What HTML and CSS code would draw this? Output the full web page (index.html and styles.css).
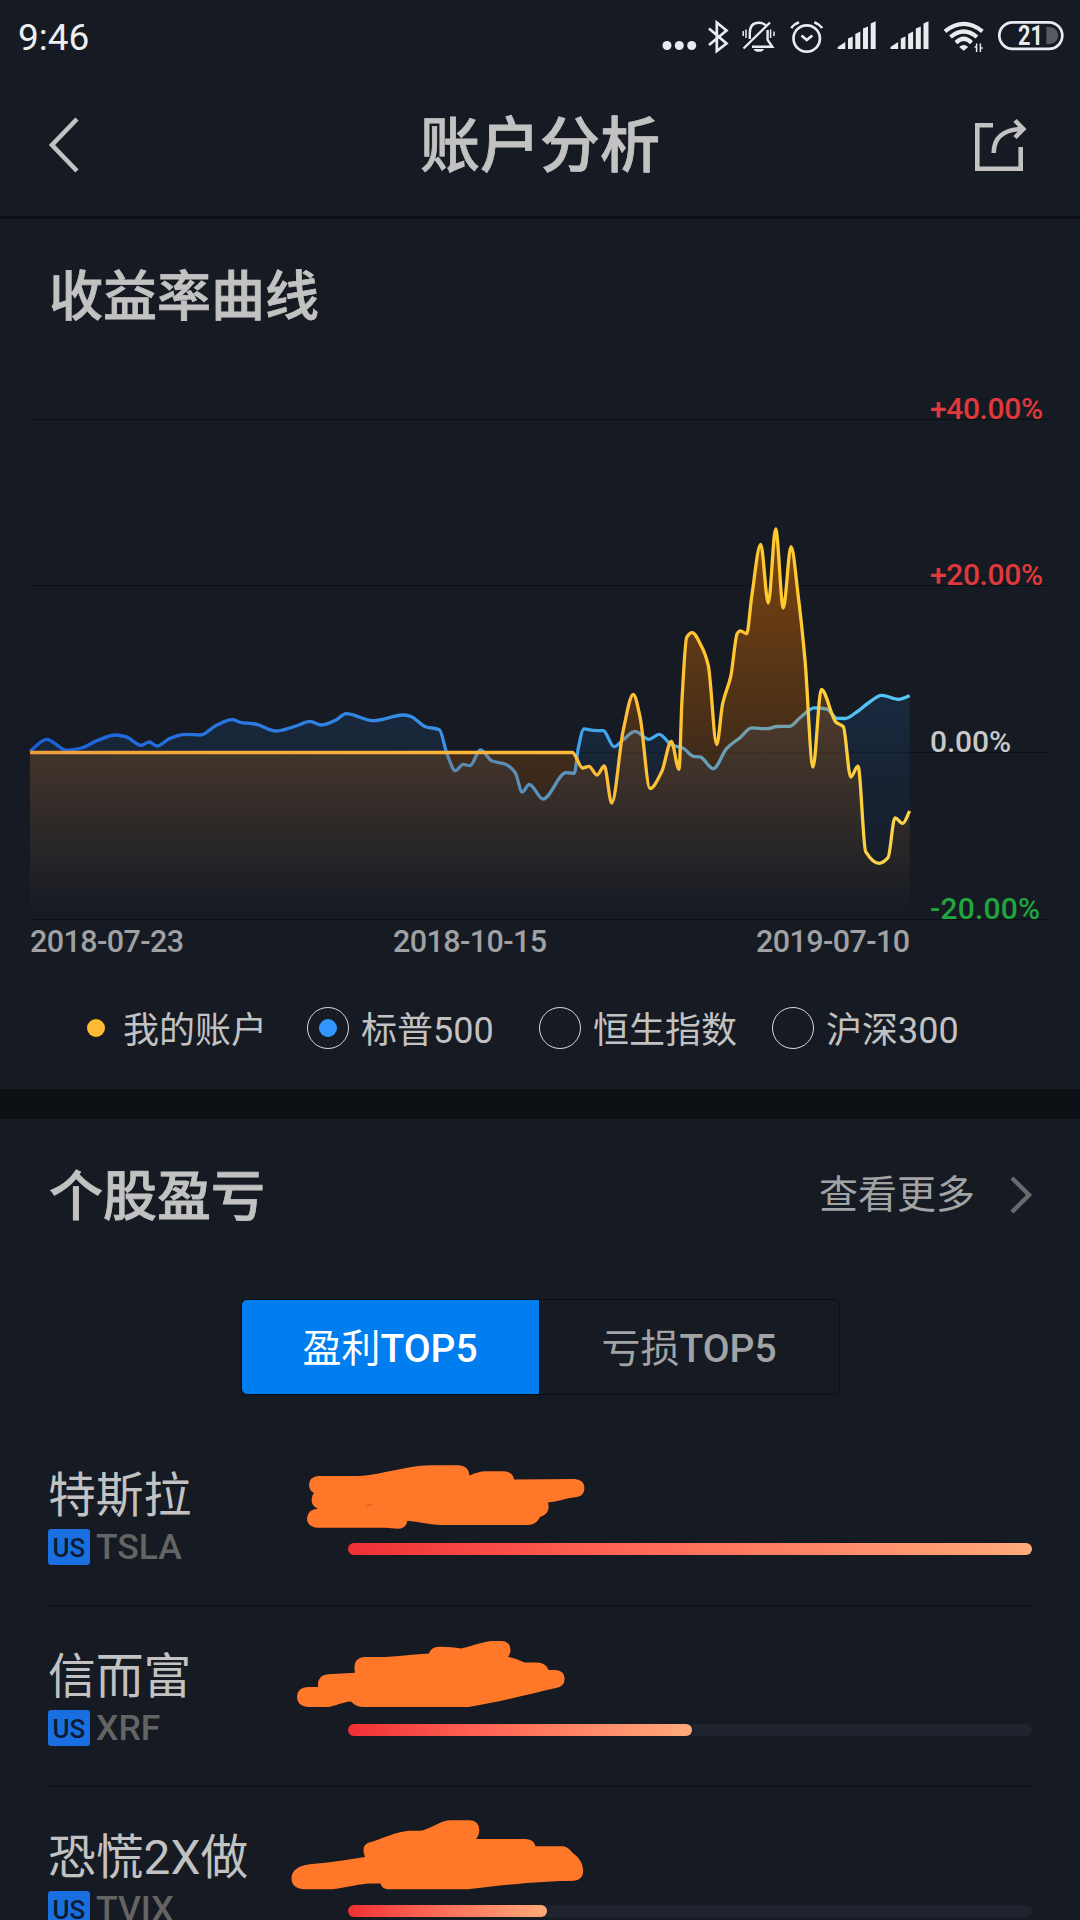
FILE: index.html
```html
<!DOCTYPE html>
<html lang="zh-CN">
<head>
    <meta charset="UTF-8">
    <meta name="viewport" content="width=device-width, initial-scale=1.0">
    <title>账户分析</title>
    <link rel="stylesheet" href="styles.css">
</head>
<body>
    <div class="status-bar">
        <span class="clock">9:46</span>
        <svg class="status-icons" viewBox="660 15 406 42" width="406" height="42">
            <!-- more -->
            <g fill="#e9ebee">
                <circle cx="667" cy="45.5" r="4.5"/>
                <circle cx="679.3" cy="45.5" r="4.5"/>
                <circle cx="691.7" cy="45.5" r="4.5"/>
            </g>
            <!-- bluetooth -->
            <path class="line" d="M709 28.5 L726.5 43.5 L716.8 51 V22.5 L726.5 30.5 L709 45"/>
            <!-- muted bell -->
            <g class="line thin">
                <path d="M770 22.5 L743.5 48.5"/>
                <path d="M749.8 39 V33 C749.8 26 753 22.8 759 22.8 C762 22.8 764.5 24 766 25.5"/>
                <path d="M767.6 30 V40 L772.3 46.8 H752"/>
                <path class="hair" d="M743.2 31 V36 M746 29.5 V38 M770.6 29.5 V38 M774 31.5 V36"/>
            </g>
            <path d="M753.5 49 H764 C762.5 52.8 755 52.8 753.5 49 Z" fill="#e9ebee"/>
            <!-- alarm -->
            <g class="line">
                <circle cx="806.7" cy="38.5" r="13.2"/>
                <path d="M801.5 35.5 L806.7 40 L812.3 35.5"/>
                <path d="M791.2 28 Q794 24 799 22.3 M814.3 22.3 Q819 24 822.2 28"/>
            </g>
            <!-- signal x2 -->
            <g id="signal" fill="#e9ebee">
                <path d="M837.7 49 V47 L845.3 42 V49 Z"/>
                <path d="M848 49 V38.5 L852.7 36.5 V49 Z"/>
                <path d="M855.3 49 V34 L860.3 31.5 V49 Z"/>
                <path d="M863 49 V28.5 L868 26.5 V49 Z"/>
                <path d="M870.7 49 V23.5 L875.7 21.3 V49 Z"/>
            </g>
            <use href="#signal" x="52.8"/>
            <!-- wifi -->
            <g class="line wifi">
                <path d="M945 31.3 Q963.7 16.5 982.4 31.3"/>
                <path d="M950.5 37 Q963.7 26 977 37"/>
                <path d="M956 42.7 Q963.7 35 971.5 42.7"/>
            </g>
            <path d="M959.2 47 Q963.7 43 968.2 47 L963.7 50.7 Z" fill="#e9ebee"/>
            <path class="line hair" d="M974.5 47 H976.6 M976.6 43.5 V52 M980.4 43.5 V52 M980.4 48 H982.7"/>
            <!-- battery -->
            <rect class="line" x="999.3" y="22.3" width="63" height="26.6" rx="13.3"/>
            <path d="M1046.3 27 H1049 C1055 27 1058 31 1058 35.5 C1058 40 1055 44 1049 44 H1046.3 Z" fill="#555a62"/>
            <text class="battery" x="1018" y="45" textLength="25" lengthAdjust="spacingAndGlyphs">21</text>
        </svg>
    </div>

    <header class="nav">
        <svg class="nav-back" viewBox="0 0 34 58" width="34" height="58">
            <path d="M29 3 L4 29 L29 55"/>
        </svg>
        <h1>账户分析</h1>
        <svg class="nav-share" viewBox="974 117 54 56" width="54" height="56">
            <path d="M993 125.3 H977.3 V168.7 H1020.7 V147"/>
            <path d="M993.7 153 C993.7 138 1003 129 1023 129"/>
            <path d="M1015 120.5 L1023.3 129 L1015 137.5"/>
        </svg>
    </header>

    <section class="curve">
        <h2>收益率曲线</h2>
        <svg class="chart" viewBox="0 380 1080 590" width="1080" height="590">
            <defs>
                <linearGradient id="mineLine" gradientUnits="userSpaceOnUse" x1="30" y1="0" x2="910" y2="0">
                    <stop offset="0" stop-color="#f0a13c"/>
                    <stop offset="0.6" stop-color="#ffb93a"/>
                    <stop offset="0.85" stop-color="#ffc92e"/>
                    <stop offset="1" stop-color="#fbd34c"/>
                </linearGradient>
                <linearGradient id="mineFill" gradientUnits="userSpaceOnUse" x1="0" y1="528" x2="0" y2="914">
                    <stop offset="0" stop-color="#c86400" stop-opacity="0.58"/>
                    <stop offset="1" stop-color="#c86400" stop-opacity="0"/>
                </linearGradient>
                <linearGradient id="indexLine" gradientUnits="userSpaceOnUse" x1="30" y1="0" x2="910" y2="0">
                    <stop offset="0" stop-color="#1a60dc"/>
                    <stop offset="0.5" stop-color="#3a94e8"/>
                    <stop offset="1" stop-color="#55c8f5"/>
                </linearGradient>
                <linearGradient id="indexFill" gradientUnits="userSpaceOnUse" x1="0" y1="695" x2="0" y2="919">
                    <stop offset="0" stop-color="#288cff" stop-opacity="0.13"/>
                    <stop offset="1" stop-color="#288cff" stop-opacity="0"/>
                </linearGradient>
            </defs>
            <path class="grid" d="M30 419.5 H1050 M30 585.5 H1050 M30 752.5 H1050 M30 919.5 H1050"/>
            <path id="indexArea" fill="url(#indexFill)"/>
            <path id="indexCurve" class="series" stroke="url(#indexLine)"/>
            <path id="mineArea" fill="url(#mineFill)"/>
            <path id="mineCurve" class="series" stroke="url(#mineLine)"/>
            <g class="axis">
                <text class="up" x="930" y="418.5" textLength="113">+40.00%</text>
                <text class="up" x="930" y="585" textLength="113">+20.00%</text>
                <text class="flat" x="930" y="751.5" textLength="81">0.00%</text>
                <text class="down" x="930" y="918.5" textLength="110">-20.00%</text>
            </g>
            <g class="dates">
                <text x="30" y="952" textLength="154">2018-07-23</text>
                <text x="393" y="952" textLength="154">2018-10-15</text>
                <text x="756" y="952" textLength="154">2019-07-10</text>
            </g>
        </svg>
        <div class="legend">
            <div class="legend-item mine"><i class="dot"></i><span>我的账户</span></div>
            <div class="legend-item"><i class="radio checked"></i><span>标普500</span></div>
            <div class="legend-item"><i class="radio"></i><span>恒生指数</span></div>
            <div class="legend-item"><i class="radio"></i><span>沪深300</span></div>
        </div>
    </section>

    <section class="stocks">
        <div class="stocks-head">
            <h2>个股盈亏</h2>
            <a class="more">查看更多
                <svg viewBox="0 0 24 40" width="24" height="40"><path d="M3 3 L20 20 L3 37"/></svg>
            </a>
        </div>

        <div class="tabs">
            <div class="tab active">盈利<b>TOP5</b></div>
            <div class="tab">亏损<b>TOP5</b></div>
        </div>

        <div class="row">
            <div class="stock">
                <div class="name">特斯拉</div>
                <div class="code"><span class="market">US</span>TSLA</div>
            </div>
            <div class="track"><div class="fill" style="width: 100%"></div></div>
            <svg class="scribble" viewBox="280 1425 320 110" width="320" height="110">
                <path d="M318 1476 H360 C380 1475 405 1466 430 1465.3 H459 Q469 1466 469.5 1475.5 Q478 1471.5 486 1471.3 H504 Q513 1472 514 1479.5 L575 1479 Q584.5 1480 584.5 1488 Q584 1497 575 1497.3 C566 1498 558 1502 548 1502.5 Q551 1514 540 1517 Q536 1525 528 1525 H440 C428 1524 418 1522 407.5 1520.7 Q406 1528.7 398 1528.7 L385 1527.8 H318 Q307 1527 307 1518 Q308 1509 318 1508.7 Q311.6 1506 311.6 1500 Q312 1495 314 1493 Q309 1490 309 1485 Q309 1477 318 1476 Z"/>
                <path class="gap" d="M364.5 1506 Q368 1504.3 373 1504.4 L370 1505.2 Z"/>
            </svg>
        </div>

        <div class="row">
            <div class="stock">
                <div class="name">信而富</div>
                <div class="code"><span class="market">US</span>XRF</div>
            </div>
            <div class="track"><div class="fill" style="width: 50.3%"></div></div>
            <svg class="scribble" viewBox="280 1606 320 110" width="320" height="110">
                <path d="M297 1697 Q297 1687.5 308 1687 H318 Q317 1675 328 1674.3 L355 1672.7 Q352 1658 364 1657 H385 C400 1656 414 1654.5 429 1653.5 Q431 1647 439 1646.7 C447 1646.5 454 1647.3 461 1648.5 C470 1647 480 1642 492 1641 H502 Q511 1642 510.5 1651 Q510 1655 508 1656.7 Q517 1658.5 524.7 1662.5 H538 Q546 1663 548.5 1670 H556 Q564.7 1671 564.7 1679 Q564 1687 556 1688 C530 1694 495 1703 468.6 1707 H364 Q356 1707 351 1701.5 C342 1702 336 1706 328 1707 H308 Q297 1706 297 1697 Z"/>
            </svg>
        </div>

        <div class="row">
            <div class="stock">
                <div class="name">恐慌2X做</div>
                <div class="code"><span class="market">US</span>TVIX</div>
            </div>
            <div class="track"><div class="fill" style="width: 29.1%"></div></div>
            <svg class="scribble" viewBox="280 1787 320 110" width="320" height="110">
                <path d="M291.5 1878 C291.5 1869 302 1864.5 312 1864 C330 1862.5 348 1859.5 365 1857 Q360 1844 371 1842 C384 1838 395 1832 409 1830.7 H421 C431 1829 440 1820.5 450 1820.3 H470 Q479 1821 479.3 1830 Q479 1836 476 1839 H526 Q534 1839.5 535.5 1846.3 H563 C569 1847 571 1852 574 1854 C580 1858 584 1866 583 1873 Q582 1880 574 1880.7 C546 1881 508 1884 468 1889.3 H388 Q382 1889 380.5 1883.5 H368 C354 1885 344 1888 332 1889.3 H303 Q291.5 1888 291.5 1878 Z"/>
            </svg>
        </div>
    </section>

    <script src="chart.js"></script>
</body>
</html>
```
FILE: styles.css
```css
* {
    margin: 0;
    padding: 0;
    box-sizing: border-box;
}

body {
    width: 1080px;
    height: 1920px;
    overflow: hidden;
    background-color: #161a22;
    color: #c2c2c2;
    font-family: Roboto, "Noto Sans CJK SC", sans-serif;
}

svg {
    display: block;
}

.status-bar {
    display: flex;
    justify-content: space-between;
    align-items: flex-start;
    height: 72px;
    padding: 15px 14px 0 18px;
}

.clock {
    color: #eceef0;
    font-size: 37px;
    line-height: 46px;
}

.line {
    fill: none;
    stroke: #e9ebee;
    stroke-width: 2.7;
}

.thin {
    stroke-width: 2.4;
}

.hair {
    stroke-width: 1.5;
}

.wifi {
    stroke-width: 4.2;
}

.battery {
    fill: #e9ebee;
    font-size: 27px;
    font-weight: 700;
}

.nav {
    display: flex;
    align-items: center;
    justify-content: space-between;
    height: 147px;
    padding: 1px 52px 0 48px;
    border-bottom: 3px solid #0d1014;
}

.nav h1 {
    padding: 5px 0 0 24px;
    font-size: 60px;
    font-weight: 500;
    line-height: 60px;
    -webkit-text-stroke: 0.8px #c2c2c2;
}

.nav-back path,
.nav-share path {
    fill: none;
    stroke: #c2c2c2;
    stroke-width: 4.6;
}

h2 {
    font-size: 54px;
    font-weight: 500;
    line-height: 54px;
    -webkit-text-stroke: 0.8px #c2c2c2;
}

.curve {
    padding: 52px 0 40px;
    border-bottom: 30px solid #0d1014;
}

.curve h2 {
    padding-left: 49px;
}

.chart {
    margin-top: 55px;
}

.grid {
    stroke: #0d1117;
    stroke-width: 1;
}

.series {
    fill: none;
    stroke-width: 3.3;
    stroke-linejoin: round;
}

.axis text {
    font-size: 30px;
    font-weight: 500;
}

.dates text {
    font-size: 30.5px;
    font-weight: 500;
    fill: #a0a1a3;
}

.up {
    fill: #e0383b;
}

.flat {
    fill: #c8c8c8;
}

.down {
    fill: #1fa63f;
}

.legend {
    display: grid;
    grid-template-columns: 220px 232px 233px auto;
    height: 42px;
    margin-top: 37px;
    padding-left: 87px;
}

.legend-item {
    display: flex;
    align-items: center;
    gap: 12px;
    font-size: 36px;
    line-height: 36px;
    white-space: nowrap;
}

.legend-item span {
    padding-top: 6px;
}

.legend-item.mine {
    gap: 18px;
}

.dot {
    width: 18px;
    height: 18px;
    border-radius: 50%;
    background-color: #ffb932;
}

.radio {
    display: flex;
    align-items: center;
    justify-content: center;
    width: 42px;
    height: 42px;
    border: 1.5px solid #d8d8d8;
    border-radius: 50%;
}

.radio.checked::after {
    content: "";
    width: 18px;
    height: 18px;
    border-radius: 50%;
    background-color: #3296ff;
}

.stocks {
    padding: 49px 48px 0;
}

.stocks-head {
    display: flex;
    align-items: center;
    justify-content: space-between;
    height: 54px;
    padding-left: 1px;
}

.stocks-head h2 {
    padding-top: 5px;
}

.more {
    display: flex;
    align-items: center;
    gap: 34px;
    margin-right: -1px;
    color: #a2a3a5;
    font-size: 39px;
    line-height: 54px;
}

.more path {
    fill: none;
    stroke: #6a6a6c;
    stroke-width: 4.4;
}

.tabs {
    display: flex;
    width: 599px;
    height: 96px;
    margin: 77px auto 30px;
    border: 1px solid #0c0f14;
    border-radius: 6px;
    overflow: hidden;
}

.tab {
    flex: 1;
    padding-top: 1px;
    color: #a2a3a5;
    font-size: 39px;
    line-height: 97px;
    text-align: center;
}

.tab b {
    font-weight: 500;
}

.tab.active {
    flex: 0 0 298px;
    background-color: #007dee;
    color: #fff;
    border-right: 1px solid #0c0f14;
}

.row {
    position: relative;
    display: grid;
    grid-template-columns: 300px 1fr;
    height: 181px;
    padding: 47px 0 40px;
    border-bottom: 1px solid #0c0f14;
}

.name {
    font-size: 47.8px;
    line-height: 48px;
    white-space: nowrap;
}

.code {
    display: flex;
    align-items: center;
    gap: 6px;
    height: 36px;
    margin-top: 9px;
    color: #646464;
    font-size: 35.5px;
    font-weight: 500;
    line-height: 39px;
}

.market {
    width: 42px;
    height: 36px;
    border-radius: 3px;
    background-color: #1a6fe0;
    color: #0d1b33;
    font-size: 26px;
    line-height: 38px;
    text-align: center;
}

.track {
    align-self: end;
    height: 12px;
    margin-bottom: 10px;
    border-radius: 6px;
    background-color: #1f232d;
}

.fill {
    height: 12px;
    border-radius: 6px;
    background: linear-gradient(90deg, #f03035, #ff6555 40%, #ffab7a);
}

/* hand-drawn cover over the amount */
.scribble {
    position: absolute;
    left: 232px;
    top: 0;
    fill: #ff7729;
}

.scribble .gap {
    fill: #6b3a22;
}
```
FILE: chart.js
```javascript
// [x, y] in chart units, zero line is y = 752.5
const BASE = 919;

const indexPoints = [
    [30, 751.3], [46.6, 739.3], [66.6, 750.3], [81.4, 748], [98, 740.3], [115.4, 735], [125.8, 736.7],
    [141, 745.3], [149.4, 742], [156.8, 746], [170.2, 738.3], [185, 734.3], [200.5, 735], [216.4, 725.3],
    [232.3, 719.7], [240.4, 722.3], [255.2, 724], [276.3, 731], [296, 726], [310, 721.3], [321.4, 725],
    [336, 720], [346, 713.7], [373.6, 720.7], [403.2, 715], [410.6, 716.3], [425.4, 726.7], [439.4, 729.7],
    [446.8, 753.3], [455.4, 770.7], [463, 764.3], [470, 765.7], [480.5, 749.8], [492, 761], [505, 764],
    [515, 772.3], [522.3, 792], [529.3, 784.3], [543, 799], [566, 772.7], [574.3, 773.3], [578.3, 748],
    [584, 728.8], [593.3, 730.4], [603.3, 730.7], [614, 746.7], [623.3, 739.7], [635, 731.3], [648.7, 739.3],
    [659.3, 734.3], [671.7, 745], [683.3, 748.3], [693.3, 756.3], [700, 756.9], [713.3, 768.7], [726.7, 748.3],
    [740, 737.7], [751.7, 727.9], [767.3, 728.7], [776.7, 726.5], [790, 726.3], [800, 717.7], [814.3, 707.9],
    [826.7, 709], [837.3, 718.4], [845, 718.5], [856.7, 712], [868.3, 703], [881.7, 695.3], [898.3, 699.3],
    [909.7, 695.7]
];

const minePoints = [
    [30, 752.5], [572.3, 752.5], [582.7, 768], [589, 766.3], [597, 775], [604.3, 766], [611.7, 803],
    [623.3, 730], [633.3, 694.5], [640, 716.7], [650, 788.5], [661.7, 771.7], [671.3, 741.5], [679, 769.3],
    [682, 700], [686.7, 637.3], [692, 632.6], [701.7, 646.7], [708.3, 665.7], [716.7, 744.5], [722.7, 703.3],
    [730.7, 676.7], [737.3, 633.3], [740.3, 630.8], [746.7, 633.7], [751.7, 596.7], [760.7, 544.5],
    [768.3, 603], [775.7, 529], [783.3, 608], [791, 546.7], [798.3, 596.7], [805, 660], [813, 767],
    [821.3, 689.5], [836, 722.3], [843.3, 726.7], [850.7, 777], [858, 766.2], [865.7, 851.7], [879, 863.4],
    [888, 857.7], [895, 817.8], [902.7, 823.4], [909.7, 811]
];

// monotone cubic interpolation
function curve(points) {
    const n = points.length;
    const slope = [];
    for (let i = 0; i < n - 1; i++) {
        slope.push((points[i + 1][1] - points[i][1]) / (points[i + 1][0] - points[i][0]));
    }
    const tangent = [slope[0]];
    for (let i = 1; i < n - 1; i++) {
        const a = slope[i - 1];
        const b = slope[i];
        tangent.push(a * b <= 0 ? 0 : 2 * a * b / (a + b));
    }
    tangent.push(slope[n - 2]);

    let d = `M${points[0][0]} ${points[0][1]}`;
    for (let i = 0; i < n - 1; i++) {
        const [x0, y0] = points[i];
        const [x1, y1] = points[i + 1];
        const h = (x1 - x0) / 3;
        d += ` C${x0 + h} ${y0 + tangent[i] * h} ${x1 - h} ${y1 - tangent[i + 1] * h} ${x1} ${y1}`;
    }
    return d;
}

function draw(name, points) {
    const d = curve(points);
    document.getElementById(name + 'Curve').setAttribute('d', d);
    document.getElementById(name + 'Area').setAttribute('d', `${d} V${BASE} H${points[0][0]} Z`);
}

draw('index', indexPoints);
draw('mine', minePoints);
```
